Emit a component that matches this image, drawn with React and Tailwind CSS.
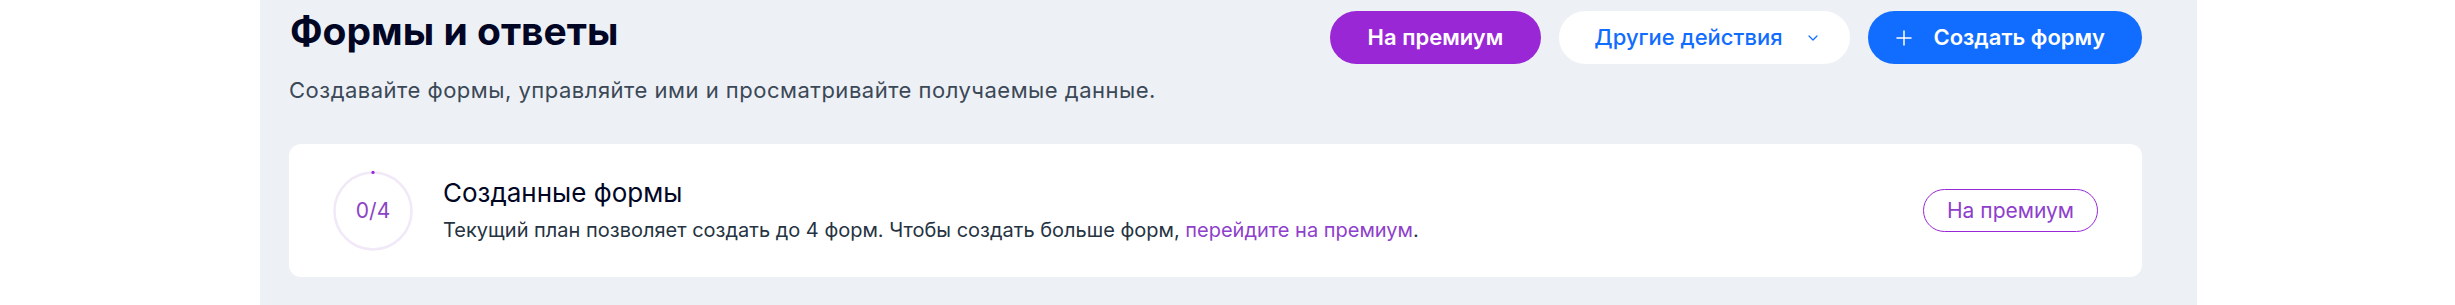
import { ChevronDown, Plus } from 'lucide-react';

function ProgressRing({ used, total }) {
  return (
    <div className="relative w-[80px] h-[80px] shrink-0">
      <svg width="80" height="80" viewBox="0 0 80 80" className="absolute inset-0">
        <circle cx="40" cy="40" r="38.5" fill="none" stroke="#f1e8f8" strokeWidth="2.5" />
        <circle cx="40" cy="1.5" r="1.6" fill="#9a27d5" />
      </svg>
      <div className="absolute inset-0 flex items-center justify-center text-[21px] leading-none text-[#8c43c6]">
        {used}/{total}
      </div>
    </div>
  );
}

export default function App() {
  return (
    <div className="w-[2455px] h-[305px] bg-white flex font-['Inter',sans-serif]">
      <div className="ml-[260px] w-[1937px] h-full bg-[#edf0f5] pl-[29px] pr-[55px] pt-[8px]">
        <div className="flex items-start justify-between">
          <h1 className="text-[39px] leading-[46px] font-bold text-[#000624] pl-[1px]">Формы и ответы</h1>
          <div className="flex gap-[18px] mt-[3px]">
            <button className="h-[53px] px-[38px] rounded-full bg-[#9a27d5] text-white text-[22px] font-semibold">
              На премиум
            </button>
            <button className="h-[53px] pl-[35px] pr-[29px] rounded-full bg-white text-[#116dff] text-[22px] font-medium flex items-center gap-[22px]">
              Другие действия
              <ChevronDown className="w-[16px] h-[16px]" strokeWidth={1.8} aria-hidden />
            </button>
            <button className="h-[53px] pl-[24px] pr-[37px] rounded-full bg-[#116dff] text-white text-[22px] font-semibold flex items-center gap-[18px]">
              <Plus className="w-[24px] h-[24px]" strokeWidth={1.5} aria-hidden />
              Создать форму
            </button>
          </div>
        </div>
        <p className="mt-[11px] text-[22px] leading-[30px] tracking-[0.5px] text-[#3b4857]">
          Создавайте формы, управляйте ими и просматривайте получаемые данные.
        </p>
        <div className="mt-[39px] h-[133px] rounded-[12px] bg-white flex items-center px-[44px]">
          <ProgressRing used={0} total={4} />
          <div className="ml-[30px] flex flex-col">
            <div className="text-[26px] leading-[32px] text-[#000624]">Созданные формы</div>
            <div className="mt-[7px] text-[20px] leading-[28px] text-[#253342]">
              Текущий план позволяет создать до 4 форм. Чтобы создать больше форм,{' '}
              <span className="text-[#8e3fcb]">перейдите на премиум</span>.
            </div>
          </div>
          <button className="ml-auto h-[43px] w-[175px] rounded-full border-[1.5px] border-[#9a27d5] text-[#8e3fcb] text-[21px]">
            На премиум
          </button>
        </div>
      </div>
    </div>
  );
}
